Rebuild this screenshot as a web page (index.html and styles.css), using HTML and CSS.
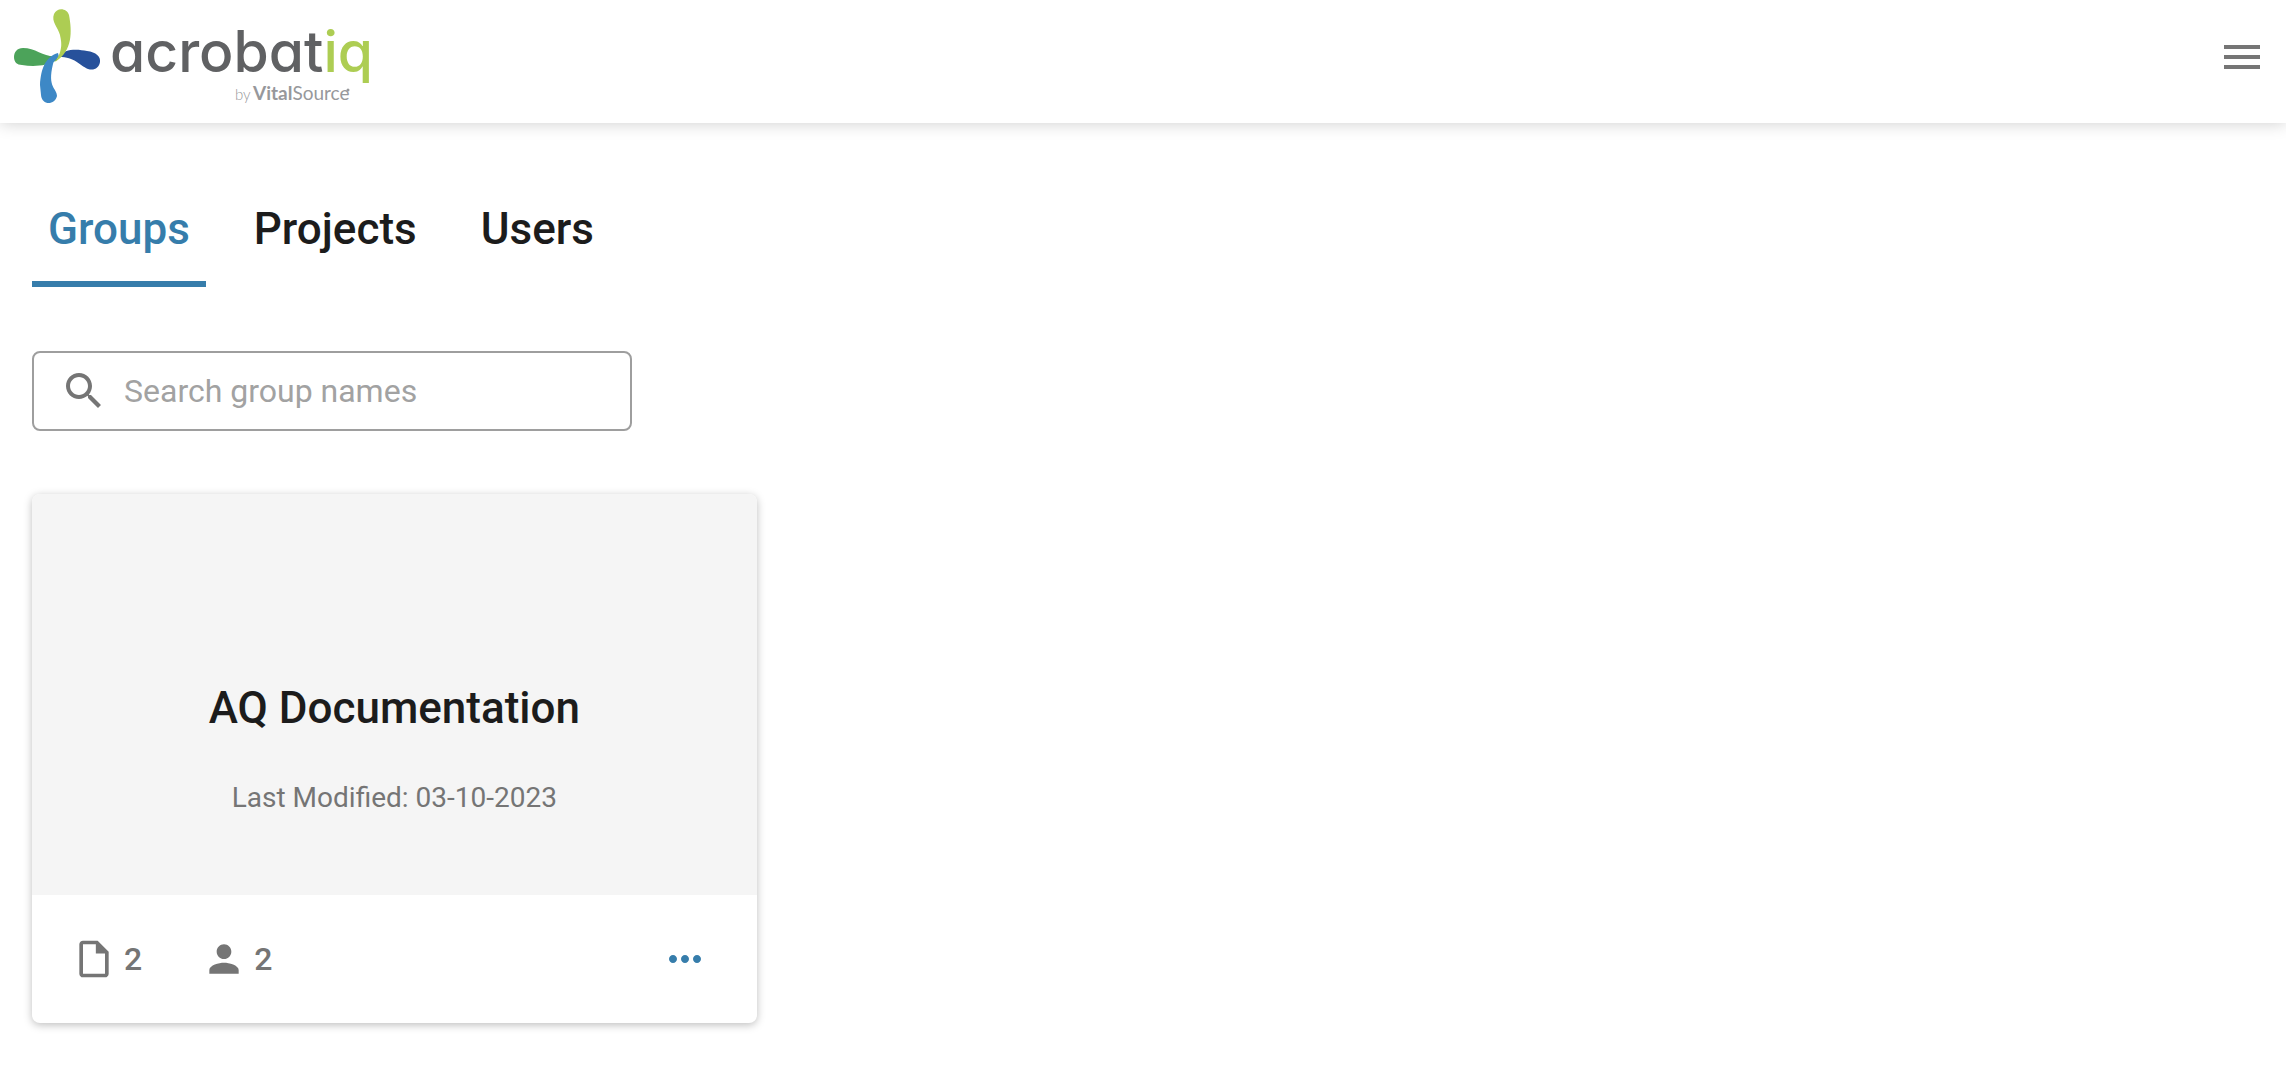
FILE: index.html
```html
<!DOCTYPE html>
<html lang="en">
<head>
	<meta charset="utf-8">
	<meta name="viewport" content="width=device-width, initial-scale=1">
	<title>Acrobatiq - Groups</title>
	<link rel="stylesheet" href="styles.css">
</head>
<body>
	<header class="header">
		<a href="#" class="logo" aria-label="acrobatiq by VitalSource">
			<svg width="380" height="112" viewBox="0 0 380 112">
				<path fill="#4ca35a" d="M57 56C45 58 36 48 23 48C17 48 14 52 14 57C14 62 17 65 22 65C34 67 47 66 57 60Z"/>
				<path fill="#27519b" d="M59 57C64 48 78 49 87 51C96 52 101 57 100 62C99 68 94 71 88 69C79 65 75 57 59 57Z"/>
				<path fill="#3d88c6" d="M58 53C45 57 41 69 40 85L41 95C42 106 55 105 57 96C57 88 47 88 53 64C54 60 58 58 59 57Z"/>
				<path fill="#adcd53" d="M55 62C64 49 61 41 60 35C58 27 51 22 54 14C57 7 67 8 69 15C72 31 73 51 55 62Z"/>
				<text class="logo-name" x="110" y="72">acrobat<tspan class="logo-iq">iq</tspan></text>
				<text class="logo-by" x="235" y="100">by</text>
				<text class="logo-vital" x="253" y="100">Vital<tspan class="logo-source">Source</tspan></text>
				<circle cx="348" cy="90" r="1.5" fill="#97989b"/>
			</svg>
		</a>
		<button class="icon-button menu" type="button" aria-label="Menu">
			<svg width="48" height="48" viewBox="0 0 24 24"><path d="M3 18h18v-2H3v2zm0-5h18v-2H3v2zm0-7v2h18V6H3z"/></svg>
		</button>
	</header>

	<main class="content">
		<nav class="tabs">
			<a href="#groups" class="tab on" aria-current="page">Groups</a>
			<a href="#projects" class="tab">Projects</a>
			<a href="#users" class="tab">Users</a>
		</nav>

		<label class="search">
			<svg width="48" height="48" viewBox="0 0 24 24" aria-hidden="true"><path d="M15.5 14h-.79l-.28-.27C15.41 12.59 16 11.11 16 9.5 16 5.91 13.09 3 9.5 3S3 5.91 3 9.5 5.91 16 9.5 16c1.61 0 3.09-.59 4.23-1.57l.27.28v.79l5 4.99L20.49 19l-4.99-5zm-6 0C7.01 14 5 11.99 5 9.5S7.01 5 9.5 5 14 7.01 14 9.5 11.99 14 9.5 14z"/></svg>
			<input type="text" placeholder="Search group names" aria-label="Search group names">
		</label>

		<div class="cards">
			<article class="card">
				<div class="card-top">
					<h2>AQ Documentation</h2>
					<p>Last Modified: 03-10-2023</p>
				</div>
				<div class="card-bottom">
					<span class="count">
						<svg width="44" height="44" viewBox="0 0 24 24" aria-hidden="true"><path d="M14 2H6c-1.1 0-2 .9-2 2v16c0 1.100.9 2 2 2h12c1.100 0 2-.9 2-2V8l-6-6zM6 20V4h7v5h5v11H6z"/></svg>
						2
					</span>
					<span class="count">
						<svg width="44" height="44" viewBox="0 0 24 24" aria-hidden="true"><path d="M12 12c2.210 0 4-1.790 4-4s-1.790-4-4-4-4 1.790-4 4 1.790 4 4 4zm0 2c-2.670 0-8 1.340-8 4v2h16v-2c0-2.660-5.330-4-8-4z"/></svg>
						2
					</span>
					<button class="icon-button more" type="button" aria-label="More options">
						<svg width="48" height="48" viewBox="0 0 24 24"><path d="M6 10c-1.100 0-2 .9-2 2s.9 2 2 2 2-.9 2-2-.9-2-2-2zm12 0c-1.100 0-2 .9-2 2s.9 2 2 2 2-.9 2-2-.9-2-2-2zm-6 0c-1.100 0-2 .9-2 2s.9 2 2 2 2-.9 2-2-.9-2-2-2z"/></svg>
					</button>
				</div>
			</article>
		</div>
	</main>
</body>
</html>
```
FILE: styles.css
```css
*{
	box-sizing: border-box;
	margin: 0;
	padding: 0;
}
body{
	font-family: Roboto, "Liberation Sans", sans-serif;
	color: #1c1c1c;
	background: #fff;
}
a{
	color: inherit;
	text-decoration: none;
}
svg{
	display: block;
	fill: currentColor;
}
.icon-button{
	border: 0;
	background: none;
	cursor: pointer;
}

/* header */
.header{
	display: flex;
	justify-content: space-between;
	align-items: flex-start;
	padding-right: 20px;
	padding-bottom: 11px;
	box-shadow: 0 0 16px rgba(0,0,0, .2);
}
.menu{
	margin-top: 33px;
	color: #757575;
}
.logo-name{
	font-family: Inter, sans-serif;
	font-size: 57px;
	font-weight: 500;
	font-feature-settings: "cv11";
	fill: #606163;
}
.logo-iq{
	fill: #adcd53;
}
.logo-by{
	font-family: Lato, sans-serif;
	font-size: 15px;
	font-weight: 300;
	fill: #97989b;
}
.logo-vital{
	font-family: Lato, sans-serif;
	font-size: 19px;
	font-weight: 700;
	fill: #97989b;
}
.logo-source{
	font-weight: 400;
}

/* page */
.content{
	padding: 64px 32px 46px;
}
.tabs{
	display: flex;
	gap: 32px;
}
.tab{
	padding: 16px 16px 26px;
	border-bottom: 6px solid transparent;
	font-size: 44px;
	font-weight: 500;
	line-height: 52px;
}
.tab.on{
	color: #367dab;
	border-color: #367dab;
}
.search{
	display: flex;
	align-items: center;
	gap: 16px;
	width: 600px;
	max-width: 100%;
	height: 80px;
	margin-top: 64px;
	padding: 0 26px;
	border: 2px solid #9e9e9e;
	border-radius: 8px;
	color: #757575;
}
.search input{
	flex: 1;
	min-width: 0;
	border: 0;
	outline: 0;
	background: none;
	font: 32px/40px Roboto, sans-serif;
	color: #1c1c1c;
}
.search input::placeholder{
	color: #a2a2a2;
	opacity: 1;
}

/* cards */
.cards{
	display: grid;
	grid-template-columns: repeat(auto-fill, minmax(640px, 1fr));
	gap: 24px;
	margin-top: 63px;
}
.card{
	border-radius: 8px;
	box-shadow: 0 2px 8px rgba(0,0,0, .26);
	overflow: hidden;
}
.card-top{
	padding: 188px 32px 79px;
	background: #f5f5f5;
	text-align: center;
}
.card-top h2{
	font-size: 44px;
	font-weight: 500;
	line-height: 52px;
}
.card-top p{
	margin-top: 46px;
	font-size: 28px;
	line-height: 36px;
	color: #757575;
}
.card-bottom{
	display: flex;
	align-items: center;
	gap: 60px;
	height: 128px;
	padding: 0 48px 0 40px;
	color: #757575;
}
.count{
	display: flex;
	align-items: center;
	gap: 8px;
	font-size: 32px;
	font-weight: 500;
}
.more{
	margin-left: auto;
	color: #367dab;
}
```
